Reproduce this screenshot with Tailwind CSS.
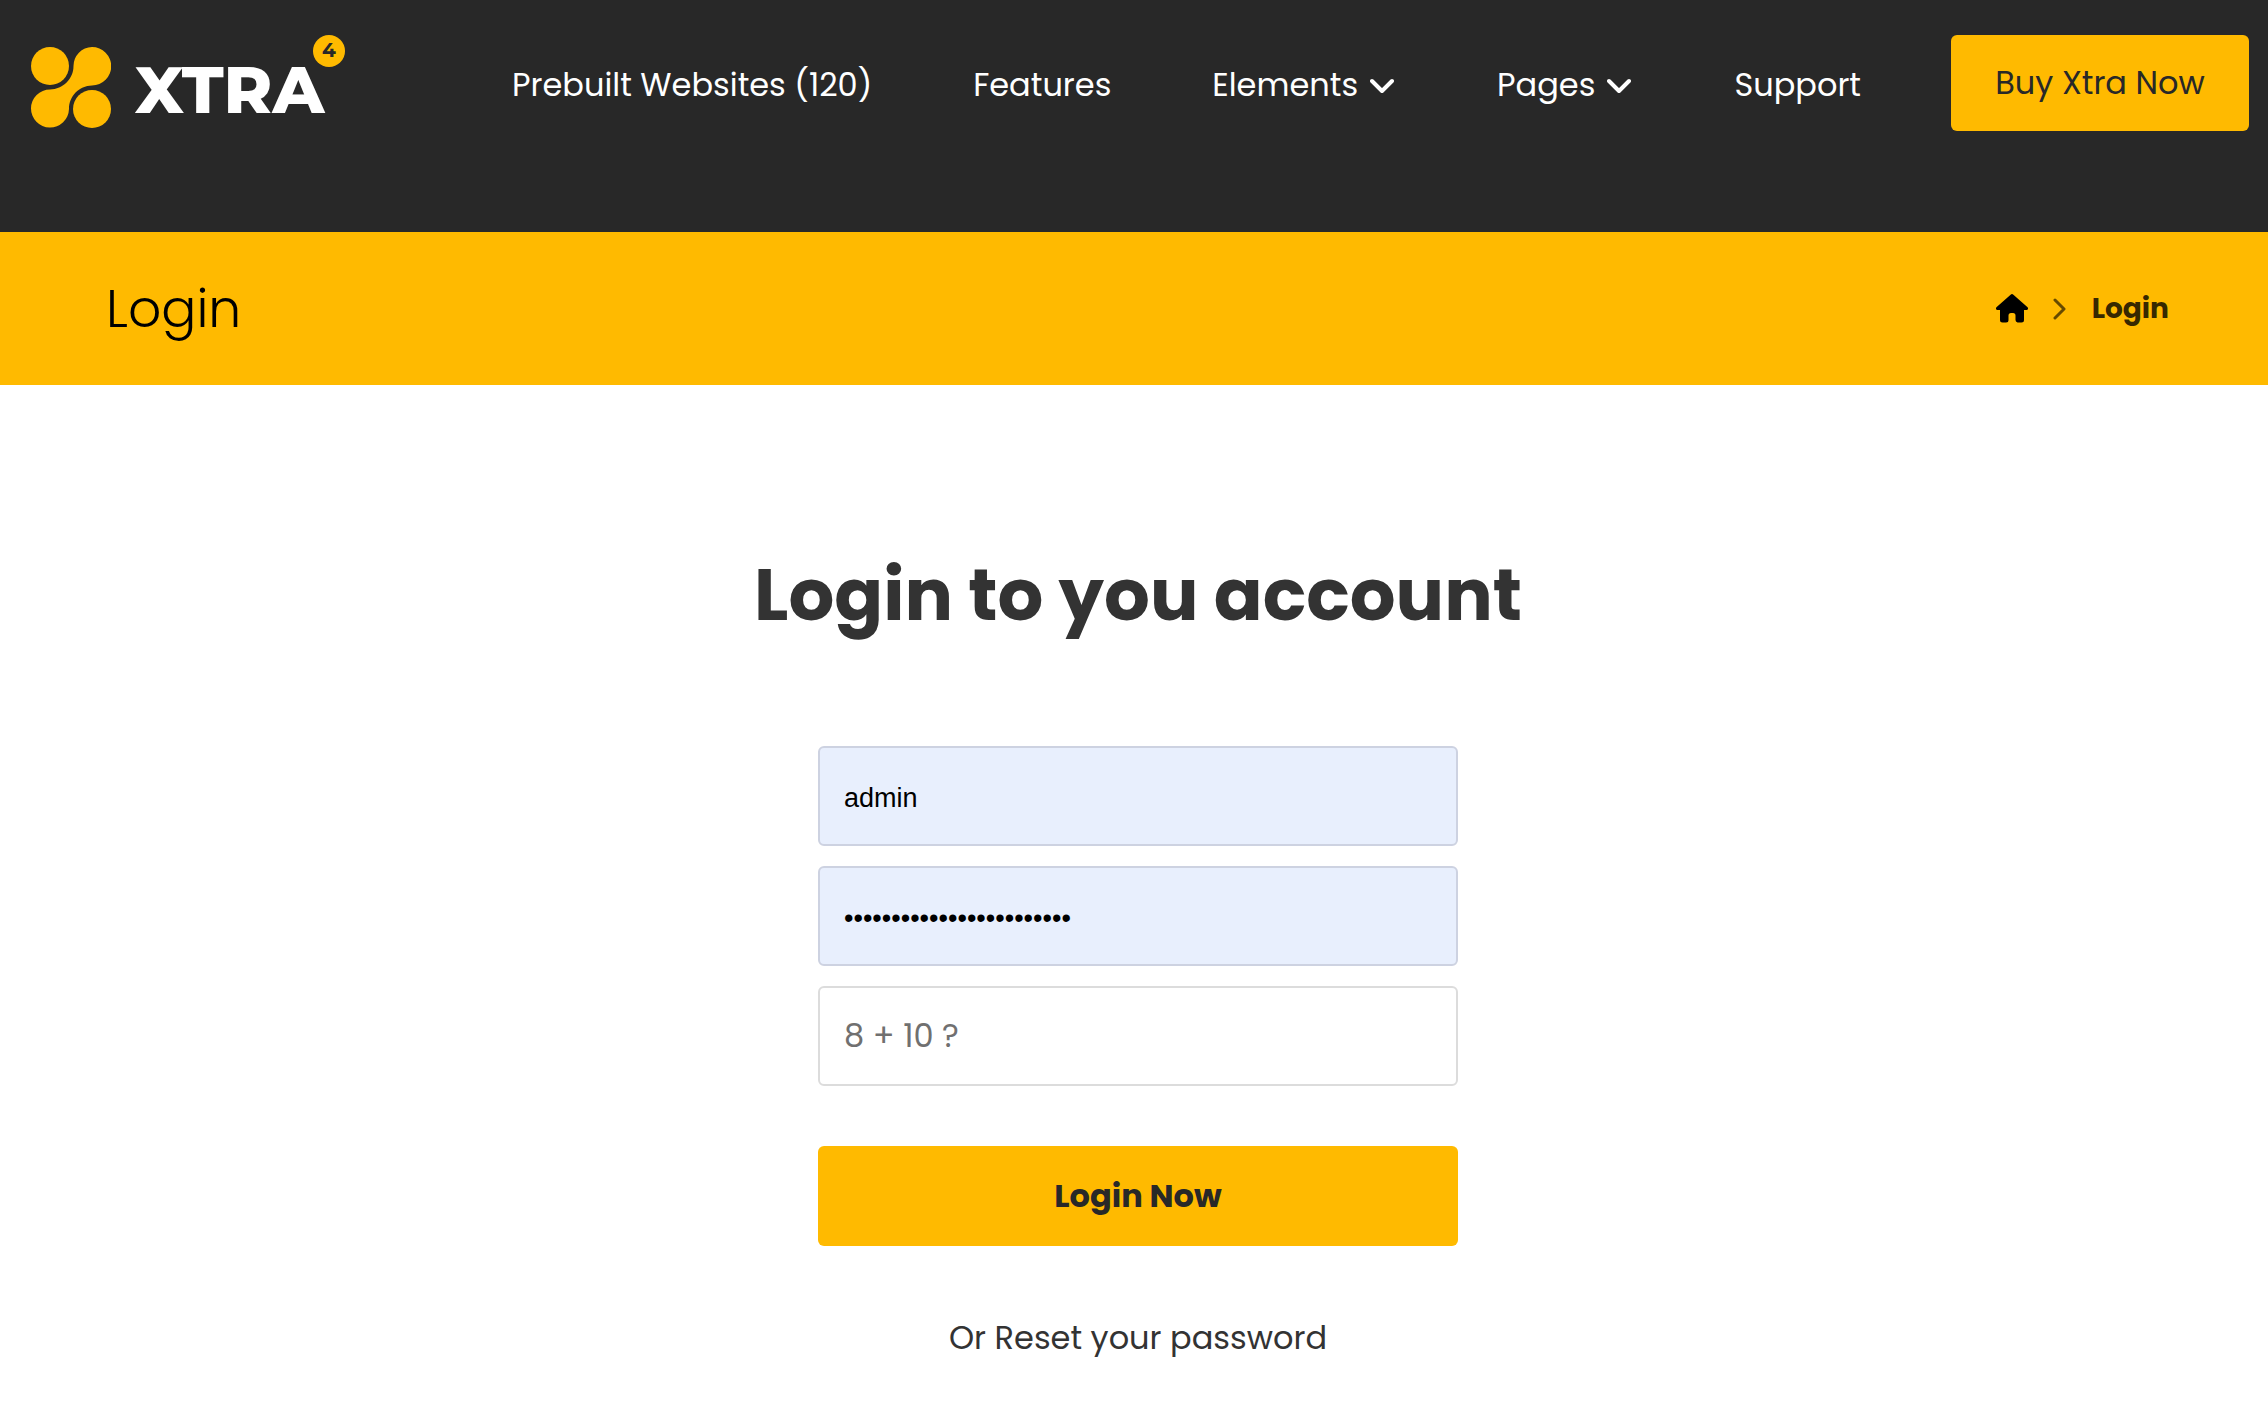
<!doctype html>
<html lang="en">
<head>
  <meta charset="UTF-8">
  <meta name="viewport" content="width=device-width, initial-scale=1.0">
  <title>Login - Xtra</title>
  <script src="https://cdn.jsdelivr.net/npm/@tailwindcss/browser@4"></script>
</head>
<body class="bg-white font-['Poppins','Inter',sans-serif] text-[32px] leading-[48px] text-[#333333]">
  <header class="bg-[#282828] text-white flex items-start pt-[35px] pb-[101px] pl-[31px] pr-[19px]">
    <a href="#" class="relative flex items-start shrink-0 w-[314px] pt-3" aria-label="Xtra 4">
      <svg class="w-20 h-[81px]" viewBox="0 0 80 81" fill="#ffba00">
        <circle cx="19" cy="19" r="19"></circle>
        <circle cx="61" cy="62" r="19"></circle>
        <path d="M61 0a19 19 0 0 1 0 38.500C48 39 38 49 38 62A19 19 0 1 1 19 42.500C32 42 42.500 32 42.500 19A19 19 0 0 1 61 0z"></path>
      </svg>
      <span class="ml-6 pt-1 text-[66px] leading-[78px] font-extrabold font-['Montserrat','Poppins',sans-serif]">XTRA</span>
      <span class="absolute right-0 top-0 w-8 h-8 rounded-full bg-[#ffba00] text-[#282828] text-[20px] leading-[31px] font-bold font-['Montserrat','Poppins',sans-serif] text-center">4</span>
    </a>
    <nav class="flex-1 flex flex-wrap justify-between pt-[26px] ml-[167px] mr-[90px]">
      <a href="#">Prebuilt Websites (120)</a>
      <a href="#">Features</a>
      <a href="#" class="flex items-center gap-3 pr-0.5">Elements
        <svg class="w-6 h-6" fill="none" stroke="currentColor" stroke-width="4" stroke-linecap="round" stroke-linejoin="round" viewBox="0 0 24 24">
          <path d="M2 8l10 10L22 8"></path>
        </svg>
      </a>
      <a href="#" class="flex items-center gap-3 pr-0.5">Pages
        <svg class="w-6 h-6" fill="none" stroke="currentColor" stroke-width="4" stroke-linecap="round" stroke-linejoin="round" viewBox="0 0 24 24">
          <path d="M2 8l10 10L22 8"></path>
        </svg>
      </a>
      <a href="#">Support</a>
    </nav>
    <a href="#" class="shrink-0 w-[298px] py-6 text-center bg-[#ffba00] text-[#282828] rounded-md">Buy Xtra Now</a>
  </header>

  <!-- Page title -->
  <section class="bg-[#ffba00] text-black flex items-center justify-between h-[153px] pl-[106px] pr-[99px]">
    <h2 class="text-[52px] leading-[72px] font-light">Login</h2>
    <nav class="flex items-center text-[28px]" aria-label="Breadcrumb">
      <a href="#" aria-label="Home">
        <svg class="w-8 h-[29px]" fill="currentColor" viewBox="0 0 32 29">
          <path d="M14.600.700a2.200 2.200 0 0 1 2.800 0L31.300 13c1.400 1.300.6 3-1 3H28v10a2.500 2.500 0 0 1-2.500 2.500h-4A2.500 2.500 0 0 1 19.500 26v-4.500a2.500 2.500 0 0 0-2.500-2.500h-2a2.500 2.500 0 0 0-2.500 2.500V26a2.500 2.500 0 0 1-2.500 2.500H6.500A2.500 2.500 0 0 1 4 26V16H1.700c-1.600 0-2.400-1.700-1-3z"></path>
        </svg>
      </a>
      <svg class="w-[14px] h-6 mx-[25px] text-black/60" fill="none" stroke="currentColor" stroke-width="3" stroke-linecap="round" stroke-linejoin="round" viewBox="0 0 14 24">
        <path d="M2 3l9 9-9 9"></path>
      </svg>
      <span class="font-bold text-black/80">Login</span>
    </nav>
  </section>

  <!-- Login form -->
  <main class="flex flex-col items-center pl-2 pt-[158px] pb-[54px]">
    <h1 class="text-[72px] leading-[104px] font-bold">Login to you account</h1>
    <form class="w-full max-w-[640px] mt-[99px] flex flex-col gap-5">
      <input type="text" aria-label="Username" value="admin" class="h-[100px] px-6 pt-1 border-2 border-[#cdd2e1] rounded-md bg-[#e8effd] text-black text-[27px] font-['Liberation_Sans',Arial,sans-serif]">
      <input type="password" aria-label="Password" value="abcdefghijklmnopqrstuvwx" class="h-[100px] px-6 pt-1 border-2 border-[#cdd2e1] rounded-md bg-[#e8effd] text-black text-[27px] font-['Liberation_Sans',Arial,sans-serif]">
      <input type="text" aria-label="Security answer" placeholder="8 + 10 ?" class="h-[100px] px-6 border-2 border-[#dcdcdc] rounded-md bg-white placeholder:text-[#707070]">
      <button type="submit" class="h-[100px] mt-10 rounded-md bg-[#ffba00] text-[#282828] font-bold">Login Now</button>
    </form>
    <a href="#" class="mt-[68px]">Or Reset your password</a>
  </main>
</body>
</html>
